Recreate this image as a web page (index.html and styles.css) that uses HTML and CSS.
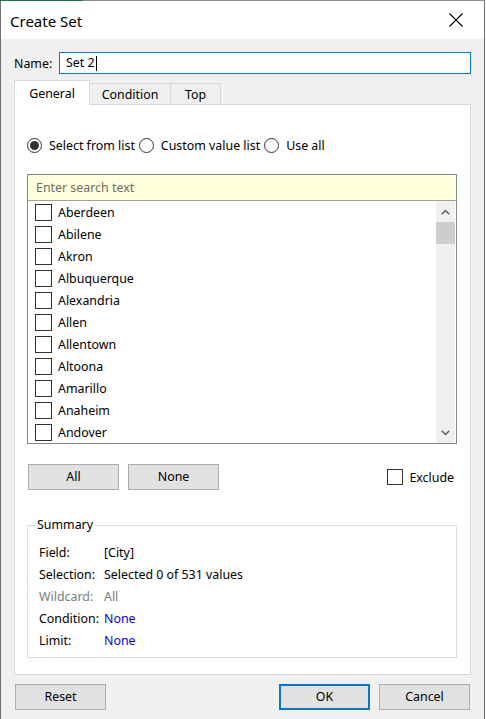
FILE: index.html
```html
<!DOCTYPE html>
<html>
<head>
<meta charset="utf-8">
<title>Create Set</title>
<link rel="stylesheet" href="styles.css">
</head>
<body>
<div class="window">
  <div class="topline"></div>
  <div class="titlebar">
    <span class="title">Create Set</span>
    <svg class="close" width="14" height="14" viewBox="0 0 14 14"><path d="M0.5 0.5 L13.5 13.5 M13.5 0.5 L0.5 13.5" stroke="#000" stroke-width="1.1" fill="none"/></svg>
  </div>
  <div class="client">
    <div class="name-row">
      <span class="name-label">Name:</span>
      <div class="input">Set 2<span class="caret"></span></div>
    </div>
    <div class="tabs">
      <div class="tab active">General</div>
      <div class="tab">Condition</div>
      <div class="tab last">Top</div>
    </div>
    <div class="panel">
      <div class="radios">
        <span class="radio checked"></span><span class="radio-label">Select from list</span>
        <span class="radio"></span><span class="radio-label">Custom value list</span>
        <span class="radio"></span><span class="radio-label">Use all</span>
      </div>
      <div class="listbox">
        <div class="search">Enter search text</div>
        <div class="list-wrap">
          <div class="items">
            <div class="item"><span class="check"></span><span>Aberdeen</span></div>
            <div class="item"><span class="check"></span><span>Abilene</span></div>
            <div class="item"><span class="check"></span><span>Akron</span></div>
            <div class="item"><span class="check"></span><span>Albuquerque</span></div>
            <div class="item"><span class="check"></span><span>Alexandria</span></div>
            <div class="item"><span class="check"></span><span>Allen</span></div>
            <div class="item"><span class="check"></span><span>Allentown</span></div>
            <div class="item"><span class="check"></span><span>Altoona</span></div>
            <div class="item"><span class="check"></span><span>Amarillo</span></div>
            <div class="item"><span class="check"></span><span>Anaheim</span></div>
            <div class="item"><span class="check"></span><span>Andover</span></div>
          </div>
          <div class="scrollbar">
            <div class="sb-btn"><svg width="9" height="6" viewBox="0 0 9 6"><path d="M0.7 5.3 L4.5 1.5 L8.3 5.3" stroke="#606060" stroke-width="1.5" fill="none"/></svg></div>
            <div class="sb-track"><div class="sb-thumb"></div></div>
            <div class="sb-btn"><svg width="9" height="6" viewBox="0 0 9 6"><path d="M0.7 0.7 L4.5 4.5 L8.3 0.7" stroke="#606060" stroke-width="1.5" fill="none"/></svg></div>
          </div>
        </div>
      </div>
      <div class="btn-row">
        <div class="btn first">All</div>
        <div class="btn">None</div>
        <div class="exclude"><span class="check small"></span><span>Exclude</span></div>
      </div>
      <fieldset class="summary">
        <legend>Summary</legend>
        <div class="srow"><span class="skey">Field:</span><span>[City]</span></div>
        <div class="srow"><span class="skey">Selection:</span><span>Selected 0 of 531 values</span></div>
        <div class="srow dim"><span class="skey">Wildcard:</span><span>All</span></div>
        <div class="srow"><span class="skey">Condition:</span><span class="link">None</span></div>
        <div class="srow"><span class="skey">Limit:</span><span class="link">None</span></div>
      </fieldset>
    </div>
    <div class="footer">
      <div class="btn">Reset</div>
      <div class="spacer"></div>
      <div class="btn default">OK</div>
      <div class="btn cancel">Cancel</div>
    </div>
  </div>
</div>
</body>
</html>
```
FILE: styles.css
```css
html, body {
  margin: 0;
  padding: 0;
  background: #ffffff;
}
body {
  font-family: "Noto Sans", "Liberation Sans", sans-serif;
  font-size: 12.4px;
  color: #000;
  width: 486px;
  height: 719px;
  overflow: hidden;
}
.window {
  width: 483px;
  height: 719px;
  border-left: 1px solid #6f6f6f;
  border-right: 1px solid #6f6f6f;
  background: #f0f0f0;
  display: flex;
  flex-direction: column;
}
.topline {
  height: 1px;
  margin: 0 -1px;
  background: linear-gradient(to right, #1e7145 0, #1e7145 83px, #8c8c8c 83px);
}
.titlebar {
  height: 38px;
  background: #fff;
  display: flex;
  align-items: center;
  padding: 0 14px 0 9px;
}
.title {
  font-size: 15px;
  flex: 1;
  padding-top: 2px;
}
.close {
  margin-right: 7px;
}
.client {
  flex: 1;
  display: flex;
  flex-direction: column;
  padding: 13px 13px 0 13px;
}
.name-row {
  display: flex;
  align-items: center;
  height: 22px;
}
.name-label {
  width: 45px;
}
.input {
  width: 404px;
  height: 20px;
  border: 1px solid #0078d7;
  background: #fff;
  padding-left: 6px;
  line-height: 20px;
  display: flex;
  align-items: center;
}
.caret {
  display: inline-block;
  width: 1px;
  height: 15px;
  background: #000;
  margin-left: 1px;
}
.tabs {
  display: flex;
  align-items: flex-end;
  margin-top: 7px;
  height: 23px;
}
.tab {
  height: 20px;
  width: 80px;
  border-top: 1px solid #d9d9d9;
  border-right: 1px solid #d9d9d9;
  background: #f0f0f0;
  text-align: center;
  line-height: 21px;
}
.tab.active {
  width: 74px;
  height: 21px;
  padding-top: 2px;
  border-left: 1px solid #d9d9d9;
  background: #fff;
  line-height: 21px;
  position: relative;
  z-index: 1;
  margin-bottom: -1px;
  padding-bottom: 1px;
}
.tab.last {
  width: 49px;
}
.panel {
  width: 430px;
  height: 536px;
  border: 1px solid #d9d9d9;
  background: #fff;
  padding: 33px 13px 0 12px;
  display: flex;
  flex-direction: column;
}
.radios {
  display: flex;
  align-items: center;
  height: 15px;
}
.radio {
  width: 13px;
  height: 13px;
  border: 1px solid #333;
  border-radius: 50%;
  display: flex;
  align-items: center;
  justify-content: center;
  flex: none;
  margin-left: 4px;
}
.radio:first-child {
  margin-left: 0;
}
.radio.checked::after {
  content: "";
  width: 9px;
  height: 9px;
  border-radius: 50%;
  background: #333;
}
.radio-label {
  margin-left: 7px;
}
.listbox {
  margin-top: 21px;
  border: 1px solid #828790;
  height: 268px;
  display: flex;
  flex-direction: column;
}
.search {
  height: 25px;
  line-height: 25px;
  background: #ffffdc;
  border-bottom: 1px solid #a0a0a0;
  color: #6d6d6d;
  padding-left: 8px;
}
.list-wrap {
  flex: 1;
  display: flex;
}
.items {
  flex: 1;
}
.item {
  height: 22px;
  display: flex;
  align-items: center;
}
.check {
  width: 15px;
  height: 15px;
  border: 1px solid #333;
  margin-left: 7px;
  margin-right: 6px;
  background: #fff;
  flex: none;
}
.scrollbar {
  width: 19px;
  margin-right: 1px;
  background: #f0f0f0;
  display: flex;
  flex-direction: column;
}
.sb-btn {
  height: 21px;
  display: flex;
  align-items: center;
  justify-content: center;
}
.sb-track {
  flex: 1;
}
.sb-thumb {
  height: 22px;
  background: #cdcdcd;
}
.btn-row {
  display: flex;
  align-items: center;
  margin-top: 20px;
  height: 26px;
}
.btn {
  width: 89px;
  height: 24px;
  border: 1px solid #adadad;
  background: #e1e1e1;
  text-align: center;
  line-height: 24px;
}
.btn-row .btn.first {
  margin-left: 1px;
  margin-right: 9px;
}
.exclude {
  margin-left: auto;
  margin-right: 3px;
  display: flex;
  align-items: center;
}
.check.small {
  width: 14px;
  height: 14px;
  margin-left: 0;
}
.summary {
  margin: 27px 0 0 0;
  padding: 8px 0 6px 11px;
  border: 1px solid #dcdcdc;
  min-width: 0;
}
.summary legend {
  margin-left: -4px;
  padding: 0 2px;
  line-height: 16px;
}
.srow {
  height: 22px;
  display: flex;
  align-items: center;
}
.skey {
  width: 65px;
}
.srow.dim {
  color: #77807e;
}
.link {
  color: #0000ff;
}
.footer {
  display: flex;
  margin-top: 9px;
  padding-left: 1px;
  padding-right: 1px;
}
.spacer {
  flex: 1;
}
.btn.default {
  width: 87px;
  height: 22px;
  border: 2px solid #0078d7;
  line-height: 22px;
}
.btn.cancel {
  margin-left: 9px;
}
```
